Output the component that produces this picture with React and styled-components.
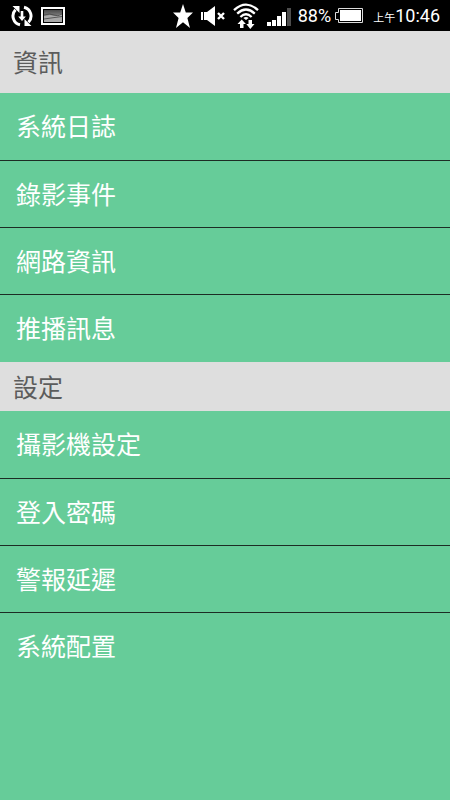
import React from "react";
import styled, { createGlobalStyle } from "styled-components";

const GlobalStyle = createGlobalStyle`
  * { box-sizing: border-box; }
  body {
    margin: 0;
    background: #66cc99;
    font-family: Roboto, "Noto Sans CJK TC", sans-serif;
  }
`;

const Screen = styled.div`
  min-height: 100vh;
  background: #66cc99;
`;

const StatusBar = styled.header`
  display: flex;
  justify-content: space-between;
  height: 31px;
  padding: 0 10px 0 11px;
  background: #000;
  color: #fff;
`;

const StatusGroup = styled.div`
  display: flex;
  align-items: center;
  gap: ${(p) => p.$gap}px;
`;

const Icon = styled.svg`
  display: block;
  flex: none;
`;

const Battery = styled.span`
  display: flex;
  align-items: center;
  gap: 4px;
  font-size: 18px;
  line-height: 32px;
`;

const Clock = styled.time`
  display: flex;
  align-items: baseline;
  margin-left: 3px;
  padding-top: 3px;
  font-size: 18px;
  line-height: 32px;
`;

const Meridiem = styled.span`
  font-size: 11px;
`;

const SectionTitle = styled.h2`
  display: flex;
  align-items: center;
  height: ${(p) => (p.$tall ? 62 : 49)}px;
  margin: 0;
  padding: 4px 13px 0;
  background: #dedede;
  color: #5c5c5c;
  font-size: 25px;
  font-weight: 400;
  line-height: 36px;
`;

const Menu = styled.ul`
  margin: 0;
  padding: 0 0 1px;
  list-style: none;
`;

const MenuItem = styled.li`
  & + & { border-top: 1px solid #1c2c24; }
`;

const MenuButton = styled.button`
  display: block;
  width: 100%;
  height: 67px;
  padding: 3px 16px 0;
  border: 0;
  background: transparent;
  color: #fff;
  font: inherit;
  font-size: 25px;
  line-height: 36px;
  text-align: left;
  cursor: pointer;

  ${MenuItem} + ${MenuItem} & { height: 66px; }
`;

const SyncIcon = () => (
  <Icon width="22" height="22" viewBox="0 0 22 22" fill="none" stroke="#fff">
    <path d="M9 19.8A9 9 0 0 1 4.5 4.8M13 2.2A9 9 0 0 1 17.5 17.2" strokeWidth="3" />
    <path d="M1.5 1H8.5V8ZM20.5 21H13.5V14Z" fill="#fff" stroke="none" />
    <path d="M11 6V12" strokeWidth="2.6" />
    <path d="M7.2 11.4H14.8L11 16Z" fill="#fff" stroke="none" />
  </Icon>
);

const PictureIcon = () => (
  <Icon width="24" height="18" viewBox="0 0 24 18">
    <defs>
      <linearGradient id="sky" x1="0" y1="0" x2="0" y2="1">
        <stop offset="0" stopColor="#4a4a4a" />
        <stop offset="1" stopColor="#b8b8b8" />
      </linearGradient>
    </defs>
    <rect x="1" y="1" width="22" height="16" fill="#000" stroke="#fff" strokeWidth="2" />
    <rect x="3" y="3" width="18" height="12" fill="url(#sky)" />
    <path d="M3 9L9 8L14 9L21 7V15H3Z" fill="#a8a8a8" />
    <path d="M3 8Q9 6 13 8T21 7M3 12L10 11L21 9.5" fill="none" stroke="#444" strokeWidth=".8" />
  </Icon>
);

const StarIcon = () => (
  <Icon width="20" height="24" viewBox="0 0 20 24">
    <path d="M10 0L12.8 8.4H20L14.4 14L17 24L10 18.2L3 24L5.6 14L0 8.4H7.2Z" fill="#fff" />
  </Icon>
);

const MuteIcon = () => (
  <Icon width="24" height="20" viewBox="0 0 24 20">
    <path d="M0 6H2V14H0ZM3 6H6L14 0V20L6 14H3Z" fill="#fff" />
    <path d="M17 7L23 13M23 7L17 13" stroke="#fff" strokeWidth="2.4" />
  </Icon>
);

const WifiIcon = () => (
  <Icon width="26" height="26" viewBox="0 0 26 26" fill="none" stroke="#fff" strokeWidth="2.3">
    <path d="M1 7.2Q13 -4 25 7.2M4.2 10.6Q13 2.4 21.8 10.6M7.4 14Q13 8.6 18.6 14" />
    <path d="M10.4 15Q13 12.8 15.6 15L13 17Z" fill="#fff" stroke="none" />
    <path d="M4.5 21L8.7 16.5L12.9 21H10.5V25H7V21ZM13.3 21H15.5V17H19V21H21.5L17.3 26Z" fill="#fff" stroke="none" />
  </Icon>
);

const SignalIcon = () => (
  <Icon width="24" height="20" viewBox="0 0 24 20" fill="#fff">
    <path d="M0 16H4V20H0ZM5 14H9V20H5ZM10 10H14V20H10ZM15 6H19V20H15Z" />
    <path d="M20 2H24V20H20Z" fill="#4d4d4d" />
  </Icon>
);

const BatteryIcon = () => (
  <Icon width="28" height="15" viewBox="0 0 28 15">
    <path d="M3.5 .5H27.5V14.5H3.5V11.5H.5V4.5H3.5Z" fill="none" stroke="#ddd" />
    <rect x="5" y="2" width="21" height="11" fill="#fff" />
  </Icon>
);

const sections = [
  { title: "資訊", tall: true, items: ["系統日誌", "錄影事件", "網路資訊", "推播訊息"] },
  { title: "設定", tall: false, items: ["攝影機設定", "登入密碼", "警報延遲", "系統配置"] },
];

export default function App() {
  return (
    <Screen lang="zh-Hant">
      <GlobalStyle />
      <StatusBar>
        <StatusGroup $gap={8}>
          <SyncIcon />
          <PictureIcon />
        </StatusGroup>
        <StatusGroup $gap={7}>
          <StatusGroup $gap={8}>
            <StarIcon />
            <MuteIcon />
            <WifiIcon />
            <SignalIcon />
          </StatusGroup>
          <Battery>
            88%
            <BatteryIcon />
          </Battery>
          <Clock>
            <Meridiem>上午</Meridiem>
            10:46
          </Clock>
        </StatusGroup>
      </StatusBar>
      <main>
        {sections.map((section) => (
          <section key={section.title}>
            <SectionTitle $tall={section.tall}>{section.title}</SectionTitle>
            <Menu>
              {section.items.map((item) => (
                <MenuItem key={item}>
                  <MenuButton type="button">{item}</MenuButton>
                </MenuItem>
              ))}
            </Menu>
          </section>
        ))}
      </main>
    </Screen>
  );
}
